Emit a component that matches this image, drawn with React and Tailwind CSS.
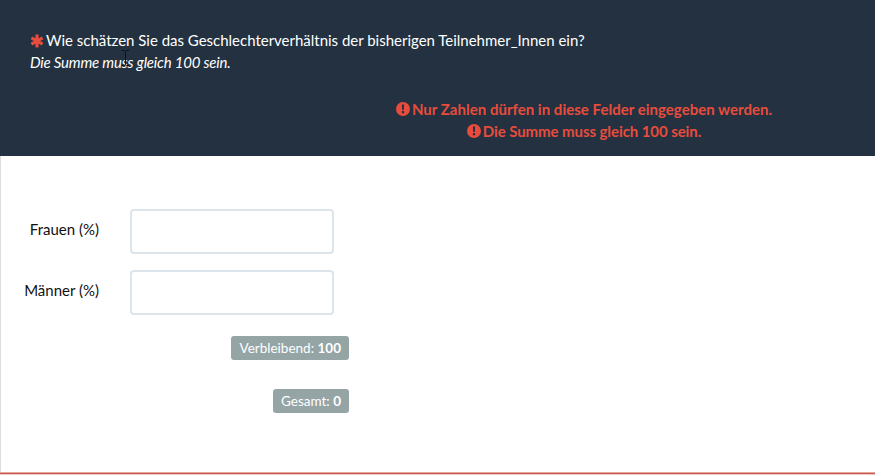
const Field = ({ label }) => (
    <div className="flex items-center">
        <label className="w-[98px] pb-[5px] text-right text-[15px] text-[#111]">{label}</label>
        <input
            type="text"
            className="ml-[31px] h-[45px] w-[204px] rounded-[4px] border-2 border-[#dce4ec] bg-white outline-none"
        />
    </div>
);

const Badge = ({ label, value, className = '' }) => (
    <span className={`flex h-[24px] items-center rounded-[3px] bg-[#95a5a6] px-[8px] text-[13.5px] text-white ${className}`}>
        {label}:&nbsp;<b className="font-bold">{value}</b>
    </span>
);

// blob-like asterisk, thicker than the icon package ones
const Asterisk = () => (
    <svg viewBox="0 0 14 14" className="mr-[2px] h-[14px] w-[14px] shrink-0 text-[#e74c3c]" stroke="currentColor" strokeWidth="3.2">
        <path d="M7 .5v13M1.4 3.8l11.2 6.4M1.4 10.2l11.2-6.4" />
    </svg>
);

const Alert = () => (
    <svg viewBox="0 0 14 14" className="h-[14px] w-[14px] shrink-0">
        <circle cx="7" cy="7" r="7" fill="currentColor" />
        <path d="M5.9 2.6h2.2l-.3 5.4H6.2zM5.9 9h2.2v2.2H5.9z" fill="#233140" />
    </svg>
);

const App = () => {
    return (
        <div className="relative h-[475px] w-[875px] overflow-hidden bg-white font-['Lato','Open_Sans',sans-serif]">
            {/* Header */}
            <div className="flex h-[156px] flex-col bg-[#233140] pl-[30px] pt-[30px] text-white">
                <p className="flex h-[21px] items-center text-[15px] tracking-[-0.01px]">
                    <Asterisk />
                    Wie schätzen Sie das Geschlechterverhältnis der bisherigen Teilnehmer_Innen ein?
                </p>
                <p className="mt-[1px] h-[21px] text-[15px] italic leading-[21px] tracking-[-0.2px]">Die Summe muss gleich 100 sein.</p>
                <div className="mt-[25px] ml-[-30px] w-[1168px] text-center text-[15px] font-bold leading-[21px] text-[#e74c3c]">
                    <p className="flex h-[22px] items-center justify-center gap-[2px] tracking-[0.02px]">
                        <Alert />
                        Nur Zahlen dürfen in diese Felder eingegeben werden.
                    </p>
                    <p className="flex h-[22px] items-center justify-center gap-[2px] tracking-[-0.08px]">
                        <Alert />
                        Die Summe muss gleich 100 sein.
                    </p>
                </div>
            </div>

            {/* Body */}
            <div className="h-[316px] border-l border-[#ddd] pt-[53px]">
                <div className="flex w-[348px] flex-col">
                    <div className="flex flex-col gap-[16px]">
                        <Field label="Frauen (%)" />
                        <Field label="Männer (%)" />
                    </div>
                    <div className="mt-[21px] flex flex-col items-end gap-[29px]">
                        <Badge label="Verbleibend" value="100" className="w-[118px] justify-end" />
                        <Badge label="Gesamt" value="0" />
                    </div>
                </div>
            </div>
            <div className="h-[1px] bg-[#e8a89f]" />
            <div className="h-[1px] bg-[#c4584c]" />
            <div className="h-[1px] bg-[#f2cdc8]" />

            {/* Mouse cursor caught in the screenshot */}
            <svg viewBox="0 0 9 16" className="absolute left-[121px] top-[50px] h-[16px] w-[9px]" fill="none" stroke="#111" strokeWidth="1">
                <path d="M1 .5h2.5L4.5 1.5 5.5.5H8M4.5 1.5v13M1 15.5h2.5l1-1 1 1H8" />
            </svg>
        </div>
    );
};

export default App;
